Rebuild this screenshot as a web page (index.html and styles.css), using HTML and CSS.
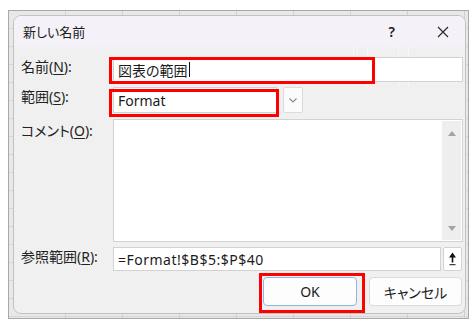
FILE: index.html
```html
<!DOCTYPE html>
<html lang="ja">
<head>
<meta charset="utf-8">
<title>新しい名前</title>
<link rel="stylesheet" href="styles.css">
</head>
<body>
<div class="desk">
  <div class="dialog">
    <div class="titlebar">
      <span class="title">新しい名前</span>
      <span class="help">?</span>
      <svg class="close" viewBox="0 0 12 12" width="12" height="12"><path d="M1 1 L11 11 M11 1 L1 11" stroke="#2a2a2a" stroke-width="1.2" fill="none"/></svg>
    </div>
    <div class="content">
      <div class="form">
        <div class="lbl">名前(<u>N</u>):</div>
        <div class="field">
          <div class="box">図表の範囲<span class="caret"></span></div>
          <span class="mark mark-name"></span>
        </div>

        <div class="lbl">範囲(<u>S</u>):</div>
        <div class="field combo-row">
          <div class="box combo">Format</div>
          <div class="dd">
            <svg viewBox="0 0 8 5" width="8" height="5"><path d="M0.5 0.5 L4 4 L7.5 0.5" stroke="#8a8a8a" stroke-width="1.1" fill="none"/></svg>
          </div>
          <span class="mark mark-scope"></span>
        </div>

        <div class="lbl lbl-comment">コメント(<u>O</u>):</div>
        <div class="field">
          <div class="memo">
            <div class="scroll">
              <svg viewBox="0 0 8 5" width="8" height="5"><path d="M4 0 L8 5 L0 5 Z" fill="#a3a3a3"/></svg>
              <svg viewBox="0 0 8 5" width="8" height="5"><path d="M0 0 L8 0 L4 5 Z" fill="#a3a3a3"/></svg>
            </div>
          </div>
        </div>

        <div class="lbl">参照範囲(<u>R</u>):</div>
        <div class="field ref-row">
          <div class="box ref">=Format!$B$5:$P$40</div>
          <div class="pick">
            <svg viewBox="0 0 9 14" width="9" height="14"><path d="M4.5 0.5 L8 5.5 L5.3 5.5 L5.3 10.5 L3.7 10.5 L3.7 5.5 L1 5.5 Z" fill="#111"/><rect x="1.5" y="12.2" width="6" height="1" fill="#111"/></svg>
          </div>
        </div>
      </div>
      <div class="actions">
        <div class="btn primary">OK<span class="mark mark-ok"></span></div>
        <div class="btn cancel">キャンセル</div>
      </div>
    </div>
  </div>
</div>
</body>
</html>
```

FILE: styles.css
```css
body {
  margin: 0;
  background: #ffffff;
  font-family: "Noto Sans", "Noto Sans CJK JP", sans-serif;
  color: #1b1b1b;
  font-feature-settings: "palt";
}

.desk {
  width: 461px;
  height: 309px;
  margin: 10px 0 0 8px;
  box-sizing: border-box;
  border: 1px solid #a8a8a8;
  padding: 4px 2px 4px 4px;
  background-color: #e8e8e8;
  background-image:
    repeating-linear-gradient(to right, transparent 0 56px, #d0d0d0 56px 57px),
    repeating-linear-gradient(to bottom, transparent 0 17px, #d6d6d6 17px 18px);
}

.dialog {
  height: 100%;
  box-sizing: border-box;
  border: 1px solid #c2c2c2;
  border-radius: 8px;
  overflow: hidden;
  background: #f0f0f0;
  display: flex;
  flex-direction: column;
}

.titlebar {
  height: 31px;
  flex: none;
  background: #f4f1f8;
  display: flex;
  align-items: center;
  padding: 0 16px 0 9px;
}

.title {
  font-size: 13px;
}

.help {
  margin-left: auto;
  margin-right: 42px;
  font-size: 14px;
  font-weight: 600;
}

.close {
  display: block;
}

.content {
  flex: 1;
  padding: 10px 2px 0 7px;
  background-image:
    linear-gradient(to right, transparent 339px, rgba(255,255,255,0.55) 339px 340px, transparent 340px 343px, rgba(255,255,255,0.55) 343px 344px, transparent 344px 353px, rgba(255,255,255,0.5) 353px 354px, transparent 354px 384px, rgba(255,255,255,0.5) 384px 385px, transparent 385px 394px, rgba(255,255,255,0.5) 394px 395px, transparent 395px);
  background-size: 100% 40px;
  background-repeat: no-repeat;
}

.form {
  display: grid;
  grid-template-columns: 92px 350px;
  grid-template-rows: 25px 27px 123px 24px;
  row-gap: 5px;
}

.lbl {
  font-size: 14px;
  line-height: 18px;
  padding-top: 1px;
  white-space: nowrap;
  color: #222222;
}

.lbl-comment {
  padding-top: 3px;
}

.lbl u {
  text-underline-offset: 2px;
}

.field {
  position: relative;
}

.box {
  height: 100%;
  box-sizing: border-box;
  background: #ffffff;
  border: 1px solid #d2d2d2;
  padding-left: 4px;
  font-size: 14px;
  display: flex;
  align-items: center;
  white-space: nowrap;
}

.caret {
  display: inline-block;
  width: 1px;
  height: 15px;
  background: #111;
  margin-left: 1px;
}

.combo-row {
  display: flex;
  align-items: flex-start;
  gap: 6px;
}

.combo {
  width: 164px;
  height: 26px;
}

.dd {
  width: 20px;
  height: 26px;
  box-sizing: border-box;
  background: #fbfbfb;
  border: 1px solid #dcdcdc;
  border-radius: 2px;
  display: flex;
  align-items: center;
  justify-content: center;
}

.dd svg, .scroll svg, .pick svg {
  display: block;
}

.memo {
  height: 100%;
  box-sizing: border-box;
  background: #ffffff;
  border: 1px solid #d2d2d2;
  display: flex;
  justify-content: flex-end;
  padding: 1px;
}

.scroll {
  width: 19px;
  background: #eeeeee;
  display: flex;
  flex-direction: column;
  justify-content: space-between;
  align-items: center;
  padding: 10px 0 9px;
  box-sizing: border-box;
}

.ref-row {
  display: flex;
  gap: 2px;
}

.ref {
  width: 328px;
  letter-spacing: 0.5px;
}

.pick {
  width: 19px;
  height: 24px;
  box-sizing: border-box;
  background: #ffffff;
  border: 1px solid #d2d2d2;
  border-radius: 2px;
  display: flex;
  align-items: center;
  justify-content: center;
}

.actions {
  display: flex;
  justify-content: flex-end;
  gap: 12px;
  margin-top: 6px;
  padding-right: 1px;
}

.btn {
  position: relative;
  height: 29px;
  box-sizing: border-box;
  border: 1px solid #dadada;
  border-radius: 4px;
  background: #fdfdfd;
  font-size: 14px;
  display: flex;
  align-items: center;
  justify-content: center;
}

.primary {
  width: 94px;
  border-color: #8fb6e2;
}

.cancel {
  width: 93px;
}

.mark {
  position: absolute;
  box-sizing: border-box;
  border: 3px solid #ff0000;
  pointer-events: none;
}

.mark-name {
  left: -4px;
  top: 0;
  width: 266px;
  height: 27px;
}

.mark-scope {
  left: -4px;
  top: 2px;
  width: 170px;
  height: 28px;
}

.mark-ok {
  left: -5px;
  top: -5px;
  width: 106px;
  height: 40px;
}
```
